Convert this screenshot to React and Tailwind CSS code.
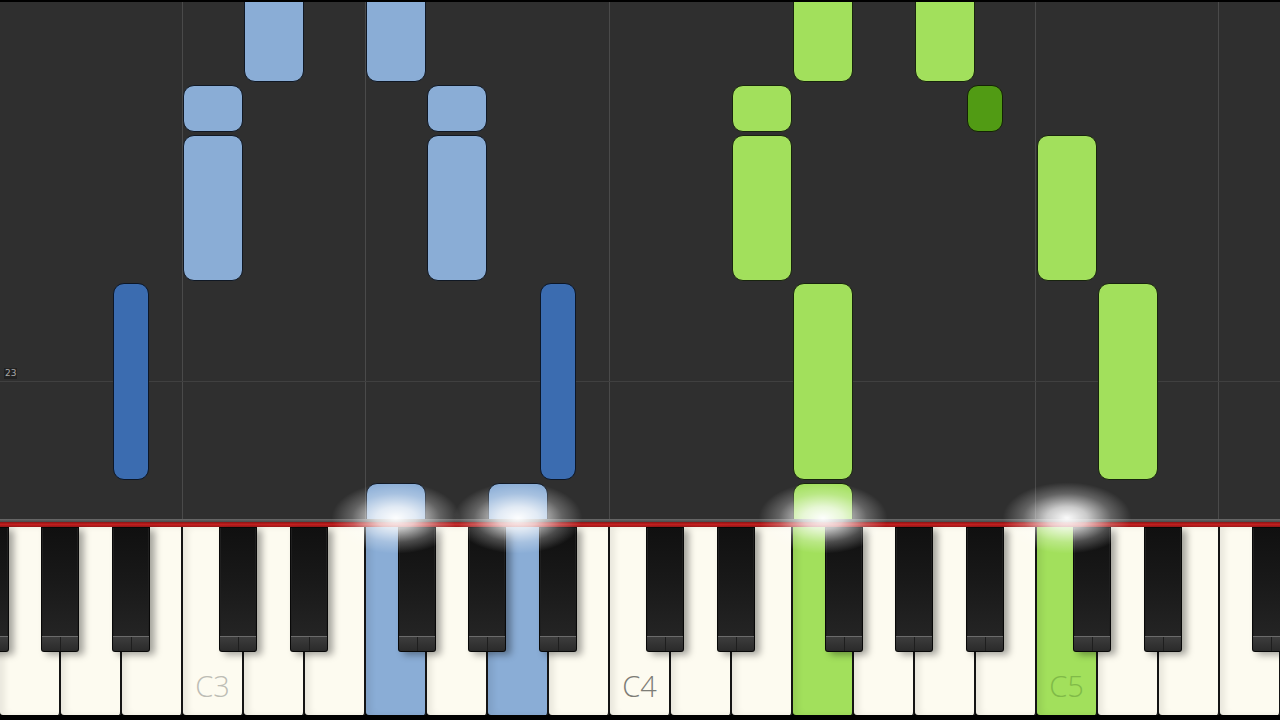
import React from "react";

const NOTE_COLORS = {
  lb: "bg-[#8aadd6] border-[#101824]",
  db: "bg-[#3b6cb0] border-[#0c1626]",
  lg: "bg-[#a2e05c] border-[#18240e]",
  dg: "bg-[#519b14] border-[#142206]",
};

const notes = [
  { x: 244, y: -20, w: 60, h: 102, c: "lb" },
  { x: 366, y: -20, w: 60, h: 102, c: "lb" },
  { x: 183, y: 85, w: 60, h: 47, c: "lb" },
  { x: 183, y: 135, w: 60, h: 146, c: "lb" },
  { x: 427, y: 85, w: 60, h: 47, c: "lb" },
  { x: 427, y: 135, w: 60, h: 146, c: "lb" },
  { x: 366, y: 483, w: 60, h: 50, c: "lb" },
  { x: 488, y: 483, w: 60, h: 50, c: "lb" },
  { x: 113, y: 283, w: 36, h: 197, c: "db" },
  { x: 540, y: 283, w: 36, h: 197, c: "db" },
  { x: 793, y: -20, w: 60, h: 102, c: "lg" },
  { x: 915, y: -20, w: 60, h: 102, c: "lg" },
  { x: 732, y: 85, w: 60, h: 47, c: "lg" },
  { x: 732, y: 135, w: 60, h: 146, c: "lg" },
  { x: 793, y: 283, w: 60, h: 197, c: "lg" },
  { x: 793, y: 483, w: 60, h: 50, c: "lg" },
  { x: 1037, y: 135, w: 60, h: 146, c: "lg" },
  { x: 1098, y: 283, w: 60, h: 197, c: "lg" },
  { x: 967, y: 85, w: 36, h: 47, c: "dg" },
];

const gridX = [182, 365, 609, 1035, 1218];

const pressed = { 6: "bg-[#8aadd6]", 8: "bg-[#8aadd6]", 13: "bg-[#a2e05c]", 17: "bg-[#a2e05c]" };
const labels = {
  3: { t: "C3", c: "text-[#bdbdb5]" },
  10: { t: "C4", c: "text-[#7d7d76]" },
  17: { t: "C5", c: "text-[#80ba48]" },
};

const octaveStarts = [-244, 183, 610, 1037];
const blackOffsets = [36, 107, 215, 285, 356];
const blackKeys = [];
octaveStarts.forEach((s) =>
  blackOffsets.forEach((o) => {
    const x = s + o;
    if (x > -40 && x < 1280) blackKeys.push(x);
  })
);

const glows = [396, 518, 823, 1067];

function BlackKey({ x }) {
  return (
    <div
      className="absolute top-0 h-[125px] w-[38px] rounded-b-[3px] bg-[#080808] p-[1px] flex flex-col shadow-[5px_3px_7px_rgba(0,0,0,0.35)]"
      style={{ left: x }}
    >
      <div className="flex-1 bg-gradient-to-b from-[#101010] via-[#191919] to-[#242424] border-x border-[#1f1f1f]" />
      <div className="h-[15px] border-t border-[#6b6b6b] bg-gradient-to-b from-[#3d3d3d] to-[#2a2a2a] flex justify-center rounded-b-[2px]">
        <div className="w-px h-full bg-[#1e1e1e]" />
      </div>
    </div>
  );
}

export default function App() {
  return (
    <div className="relative w-[1280px] h-[720px] overflow-hidden bg-black flex flex-col font-['Open_Sans','Noto_Sans',sans-serif]">
      {/* Note roll */}
      <div className="relative h-[519px] shrink-0 bg-[#2f2f2f] overflow-hidden">
        {gridX.map((x) => (
          <div key={x} className="absolute top-0 bottom-0 w-px bg-[#4a4a4a]" style={{ left: x }} />
        ))}
        <div className="absolute left-0 right-0 top-[381px] h-px bg-[#404040]" />
        <div className="absolute left-[4px] top-[368px] px-[1px] bg-[#222222] text-[9px] leading-[11px] text-[#a8a8a8] font-['DejaVu_Sans',sans-serif]">
          23
        </div>
        {notes.map((n, i) => (
          <div
            key={i}
            className={`absolute rounded-[11px] border ${NOTE_COLORS[n.c]}`}
            style={{ left: n.x, top: n.y, width: n.w, height: n.h }}
          />
        ))}
        <div className="absolute top-0 left-0 right-0 h-[2px] bg-black" />
      </div>

      {/* separator */}
      <div className="h-[3px] shrink-0 bg-gradient-to-b from-[#6a6a6a] to-[#4a4a4a]" />
      <div className="h-[5px] shrink-0 bg-gradient-to-b from-[#8e1414] via-[#c42020] to-[#9a1818]" />

      {/* Keyboard */}
      <div className="relative flex-1 flex pb-[5px] bg-black">
        {Array.from({ length: 21 }).map((_, i) => (
          <div
            key={i}
            className={`w-[61px] shrink-0 h-full border-r-2 border-[#141414] rounded-b-[3px] flex items-end justify-center pb-[15px] shadow-[inset_5px_0_6px_rgba(0,0,0,0.08)] ${
              pressed[i] || "bg-[#fdfbf0]"
            }`}
          >
            {labels[i] && (
              <span className={`text-[29px] leading-none font-light ${labels[i].c}`}>{labels[i].t}</span>
            )}
          </div>
        ))}
        {blackKeys.map((x) => (
          <BlackKey key={x} x={x} />
        ))}
      </div>

      {/* glows */}
      {glows.map((x) => (
        <div
          key={x}
          className="absolute top-[482px] w-[130px] h-[72px] pointer-events-none bg-[radial-gradient(ellipse_at_center,rgba(255,255,255,0.98)_0%,rgba(255,255,255,0.75)_22%,rgba(255,255,255,0.25)_48%,rgba(255,255,255,0)_70%)]"
          style={{ left: x - 65 }}
        />
      ))}
    </div>
  );
}
